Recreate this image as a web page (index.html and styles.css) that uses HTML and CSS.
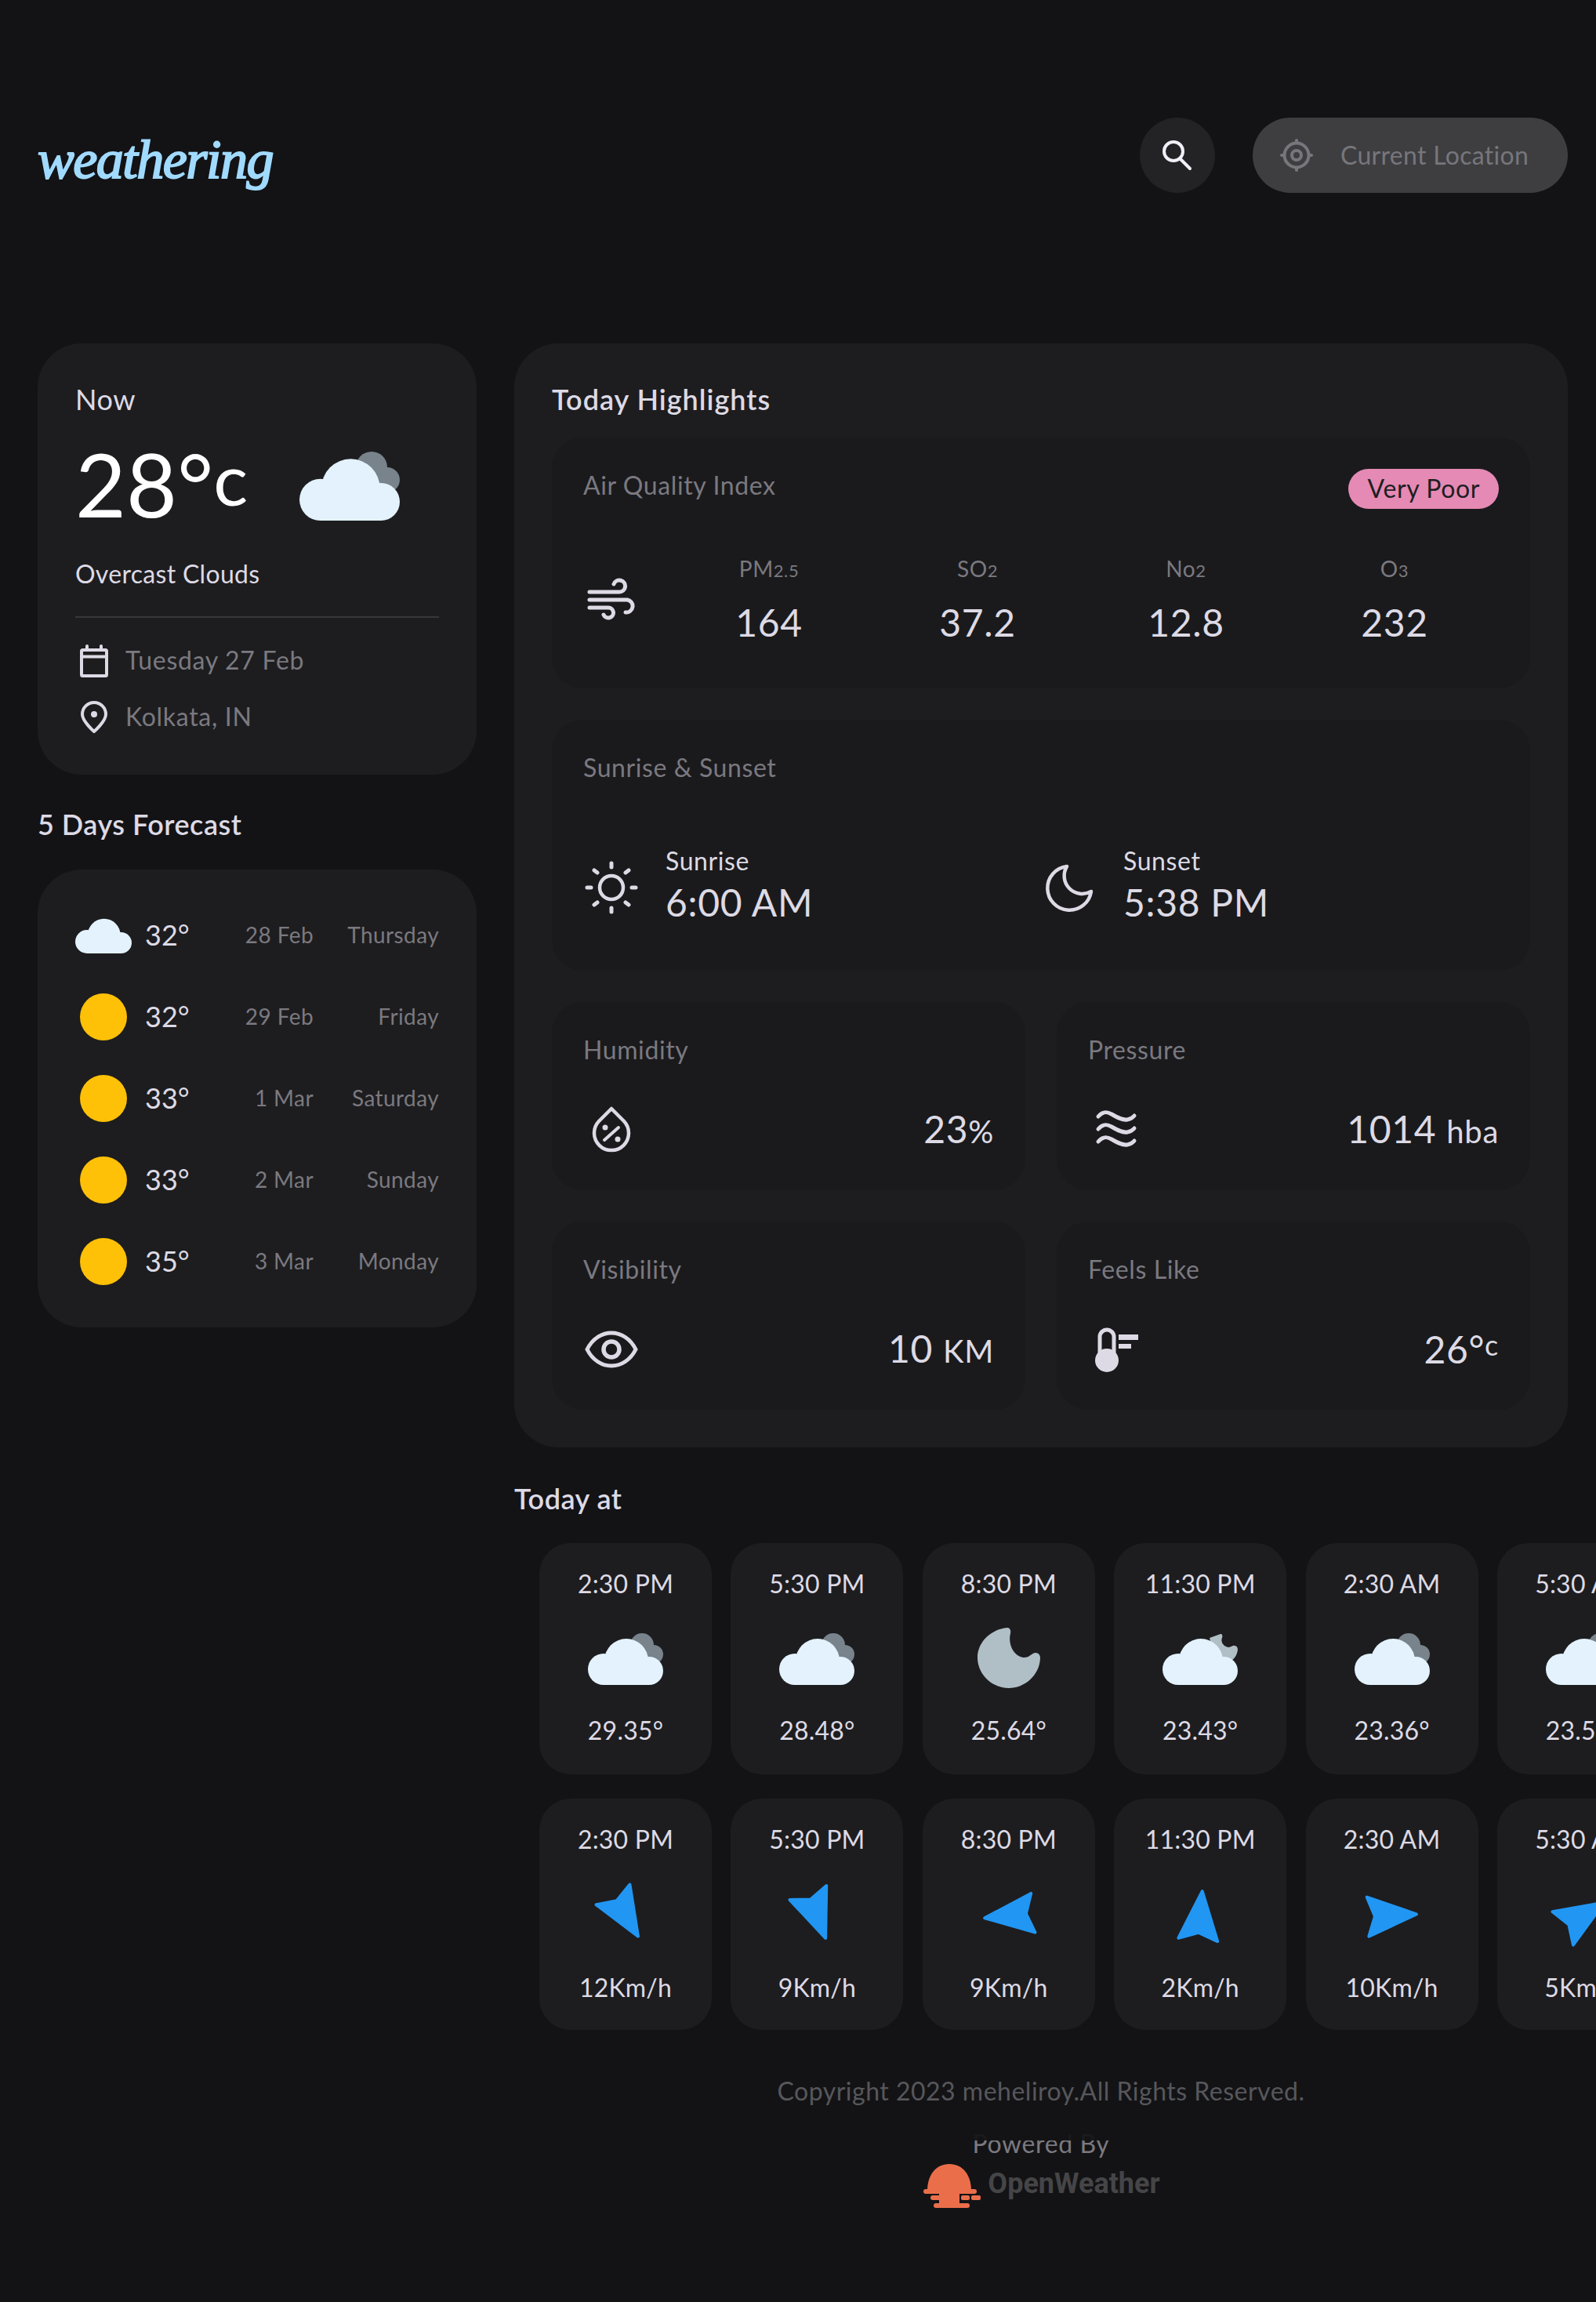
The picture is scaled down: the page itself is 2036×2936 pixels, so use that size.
FILE: index.html
```html
<!DOCTYPE html>
<html lang="en">
<head>
  <meta charset="UTF-8">
  <title>Weathering</title>
  <link rel="stylesheet" href="styles.css">
</head>
<body>

  <svg class="defs" width="0" height="0">
    <symbol id="cloud-front" viewBox="0 0 96 66">
      <g fill="#e3f2fd">
        <circle cx="20" cy="46" r="20"/>
        <circle cx="49" cy="35" r="28"/>
        <circle cx="78" cy="48" r="18"/>
        <rect x="20" y="40" width="58" height="26"/>
      </g>
    </symbol>
    <symbol id="cloud-over" viewBox="0 0 96 66">
      <g fill="#78838b">
        <circle cx="69" cy="15" r="15"/>
        <circle cx="84" cy="27" r="12"/>
        <rect x="60" y="20" width="24" height="20"/>
      </g>
      <use href="#cloud-front" width="96" height="66"/>
    </symbol>
    <symbol id="cloud-moon" viewBox="0 0 96 66">
      <path fill="#b0bec5" d="M74 1C76 1 77 3 76 6C74 10 77 17 84 18C88 18 90 15 92 16C95 16 96 19 96 21C95 28 92 33 86 36L68 36L60 6Z"/>
      <use href="#cloud-front" width="96" height="66"/>
    </symbol>
    <symbol id="arrow" viewBox="-48 -48 96 96">
      <polygon fill="#2196f3" stroke="#2196f3" stroke-width="4" stroke-linejoin="round" points="0,-31 25,31 0,22 -25,31"/>
    </symbol>
  </svg>

  <div class="page">

    <header class="header">
      <div class="logo">weathering</div>
      <div class="header-actions">
        <button class="search-btn" type="button" aria-label="Search">
          <svg width="48" height="48" viewBox="0 0 48 48" fill="none" stroke="#f1eff8" stroke-width="4" stroke-linecap="round">
            <circle cx="19" cy="19" r="12"/>
            <path d="M28 29L40 41"/>
          </svg>
        </button>
        <button class="location-btn" type="button">
          <svg width="48" height="48" viewBox="0 0 48 48" fill="none" stroke="#77767c" stroke-width="4" stroke-linecap="round">
            <circle cx="24" cy="24" r="15.5"/>
            <circle cx="24" cy="24" r="6"/>
            <path d="M24 5V8M24 40V43M5 24H8M40 24H43"/>
          </svg>
          <span>Current Location</span>
        </button>
      </div>
    </header>

    <main class="main">

      <div class="left-col">
        <section class="card now-card">
          <h2 class="now-title">Now</h2>
          <div class="hero">
            <p class="hero-temp">28°<span class="hero-unit">c</span></p>
            <svg class="hero-icon" width="128" height="88"><use href="#cloud-over" width="128" height="88"/></svg>
          </div>
          <p class="now-desc">Overcast Clouds</p>
          <ul class="meta">
            <li>
              <svg width="48" height="48" viewBox="0 0 48 48" fill="none" stroke="#dddae5" stroke-width="4" stroke-linejoin="round" stroke-linecap="round">
                <rect x="8" y="11" width="32" height="33" rx="1.5"/>
                <path d="M8 19.5H40M15 6V10M33 6V10"/>
              </svg>
              <span>Tuesday 27 Feb</span>
            </li>
            <li>
              <svg width="48" height="48" viewBox="0 0 48 48" fill="none" stroke="#dddae5" stroke-width="4" stroke-linejoin="round">
                <path d="M24 43C24 43 9 30 9 21A15 15 0 0 1 39 21C39 30 24 43 24 43Z"/>
                <circle cx="24" cy="21" r="4" fill="#dddae5" stroke="none"/>
              </svg>
              <span>Kolkata, IN</span>
            </li>
          </ul>
        </section>

        <h2 class="section-title forecast-title">5 Days Forecast</h2>
        <section class="card forecast">
          <div class="forecast-row">
            <svg class="forecast-cloud" width="72" height="45" viewBox="0 6 96 60"><use href="#cloud-front" width="96" height="66"/></svg>
            <span class="forecast-temp">32°</span>
            <span class="forecast-date">28 Feb</span>
            <span class="forecast-day">Thursday</span>
          </div>
          <div class="forecast-row">
            <span class="sun"></span>
            <span class="forecast-temp">32°</span>
            <span class="forecast-date">29 Feb</span>
            <span class="forecast-day">Friday</span>
          </div>
          <div class="forecast-row">
            <span class="sun"></span>
            <span class="forecast-temp">33°</span>
            <span class="forecast-date">1 Mar</span>
            <span class="forecast-day">Saturday</span>
          </div>
          <div class="forecast-row">
            <span class="sun"></span>
            <span class="forecast-temp">33°</span>
            <span class="forecast-date">2 Mar</span>
            <span class="forecast-day">Sunday</span>
          </div>
          <div class="forecast-row">
            <span class="sun"></span>
            <span class="forecast-temp">35°</span>
            <span class="forecast-date">3 Mar</span>
            <span class="forecast-day">Monday</span>
          </div>
        </section>
      </div>

      <div class="right-col">
        <section class="card highlights">
          <h2 class="section-title highlights-title">Today Highlights</h2>

          <div class="tile tile-air">
            <div class="tile-head">
              <h3 class="tile-title">Air Quality Index</h3>
              <span class="badge">Very Poor</span>
            </div>
            <div class="air-body">
              <svg class="icon-72" viewBox="0 0 72 72" fill="none" stroke="#dddae5" stroke-width="5" stroke-linecap="round">
                <path d="M8 26H46a7.5 7.5 0 1 0-7-10"/>
                <path d="M8 36H56a8 8 0 1 1-2 16"/>
                <path d="M8 46H32a6.5 6.5 0 1 1-6 9"/>
              </svg>
              <div class="air-grid">
                <div class="air-stat"><p class="air-label">PM<small>2.5</small></p><p class="value">164</p></div>
                <div class="air-stat"><p class="air-label">SO<small>2</small></p><p class="value">37.2</p></div>
                <div class="air-stat"><p class="air-label">No<small>2</small></p><p class="value">12.8</p></div>
                <div class="air-stat"><p class="air-label">O<small>3</small></p><p class="value">232</p></div>
              </div>
            </div>
          </div>

          <div class="tile tile-sun">
            <h3 class="tile-title">Sunrise &amp; Sunset</h3>
            <div class="sun-body">
              <div class="sun-item">
                <svg class="icon-72" viewBox="0 0 72 72" fill="none" stroke="#dddae5" stroke-linecap="round">
                  <circle cx="36" cy="36" r="15" stroke-width="4.5"/>
                  <path stroke-width="5" d="M36 5V10M36 62V67M5 36H10M62 36H67M14 14L18 17M54 55L58 58M14 58L18 55M54 17L58 14"/>
                </svg>
                <div>
                  <p class="sun-label">Sunrise</p>
                  <p class="value">6:00 AM</p>
                </div>
              </div>
              <div class="sun-item">
                <svg class="icon-72" viewBox="0 0 72 72" fill="none" stroke="#dddae5" stroke-width="4.5" stroke-linejoin="round">
                  <path d="M33 9A28 28 0 1 0 64 41A23 23 0 0 1 33 9Z"/>
                </svg>
                <div>
                  <p class="sun-label">Sunset</p>
                  <p class="value">5:38 PM</p>
                </div>
              </div>
            </div>
          </div>

          <div class="tile-grid">
            <div class="tile tile-small">
              <h3 class="tile-title">Humidity</h3>
              <div class="small-body">
                <svg class="icon-72" viewBox="0 0 72 72" fill="none" stroke="#dddae5" stroke-width="4.5" stroke-linejoin="round" stroke-linecap="round">
                  <path d="M36 9L20 25A22 22 0 1 0 52 25Z"/>
                  <path stroke-width="4" d="M27 49L45 33"/>
                  <circle cx="28" cy="33" r="3.5" fill="#dddae5" stroke="none"/>
                  <circle cx="44" cy="48" r="3.5" fill="#dddae5" stroke="none"/>
                </svg>
                <p class="value">23<span class="unit">%</span></p>
              </div>
            </div>
            <div class="tile tile-small">
              <h3 class="tile-title">Pressure</h3>
              <div class="small-body">
                <svg class="icon-72" viewBox="0 0 72 72" fill="none" stroke="#dddae5" stroke-width="5" stroke-linecap="round">
                  <path d="M13 19C18 13 23 12 30 16S44 24 50 23 57 20 59 18"/>
                  <path d="M13 35C18 29 23 28 30 32S44 40 50 39 57 36 59 34"/>
                  <path d="M13 51C18 45 23 44 30 48S44 56 50 55 57 52 59 50"/>
                </svg>
                <p class="value">1014 <span class="unit">hba</span></p>
              </div>
            </div>
            <div class="tile tile-small">
              <h3 class="tile-title">Visibility</h3>
              <div class="small-body">
                <svg class="icon-72" viewBox="0 0 72 72" fill="none" stroke="#dddae5" stroke-width="5">
                  <path d="M5 36C12 22 24 15 36 15S60 22 67 36C60 50 48 57 36 57S12 50 5 36Z"/>
                  <circle cx="36" cy="36" r="10" stroke-width="5.5"/>
                </svg>
                <p class="value">10 <span class="unit">KM</span></p>
              </div>
            </div>
            <div class="tile tile-small">
              <h3 class="tile-title">Feels Like</h3>
              <div class="small-body">
                <svg class="icon-72" viewBox="0 0 72 72" fill="none" stroke="#dddae5" stroke-width="5">
                  <path d="M15 44V20a9 9 0 0 1 18 0V44"/>
                  <circle cx="24" cy="50" r="15" fill="#dddae5" stroke="none"/>
                  <path fill="#dddae5" stroke="none" d="M39 17H64V24H39ZM39 29H55V35H39Z"/>
                </svg>
                <p class="value">26°<span class="unit-raised">c</span></p>
              </div>
            </div>
          </div>
        </section>

        <h2 class="section-title today-title">Today at</h2>
        <div class="slots">
          <div class="slot"><p>2:30 PM</p><svg class="slot-cloud" width="96" height="66"><use href="#cloud-over" width="96" height="66"/></svg><p>29.35°</p></div>
          <div class="slot"><p>5:30 PM</p><svg class="slot-cloud" width="96" height="66"><use href="#cloud-over" width="96" height="66"/></svg><p>28.48°</p></div>
          <div class="slot"><p>8:30 PM</p>
            <svg class="slot-moon" width="80" height="78" viewBox="0 0 80 78"><path fill="#b0bec5" d="M38 1C41 1 43 4 42 8C39 20 44 36 58 39C66 40 69 33 74 33C78 33 80 36 80 40C79 62 60 78 40 78C18 78 0 60 0 39C0 20 16 3 38 1Z"/></svg>
            <p>25.64°</p></div>
          <div class="slot"><p>11:30 PM</p><svg class="slot-cloud" width="96" height="66"><use href="#cloud-moon" width="96" height="66"/></svg><p>23.43°</p></div>
          <div class="slot"><p>2:30 AM</p><svg class="slot-cloud" width="96" height="66"><use href="#cloud-over" width="96" height="66"/></svg><p>23.36°</p></div>
          <div class="slot"><p>5:30 AM</p><svg class="slot-cloud" width="96" height="66"><use href="#cloud-over" width="96" height="66"/></svg><p>23.56°</p></div>
        </div>
        <div class="slots slots-wind">
          <div class="slot"><p>2:30 PM</p><svg class="slot-arrow" width="96" height="96" style="transform: rotate(149deg)"><use href="#arrow" width="96" height="96"/></svg><p>12Km/h</p></div>
          <div class="slot"><p>5:30 PM</p><svg class="slot-arrow" width="96" height="96" style="transform: rotate(159deg)"><use href="#arrow" width="96" height="96"/></svg><p>9Km/h</p></div>
          <div class="slot"><p>8:30 PM</p><svg class="slot-arrow" width="96" height="96" style="transform: rotate(264deg)"><use href="#arrow" width="96" height="96"/></svg><p>9Km/h</p></div>
          <div class="slot"><p>11:30 PM</p><svg class="slot-arrow" width="96" height="96" style="transform: rotate(5deg)"><use href="#arrow" width="96" height="96"/></svg><p>2Km/h</p></div>
          <div class="slot"><p>2:30 AM</p><svg class="slot-arrow" width="96" height="96" style="transform: rotate(87deg)"><use href="#arrow" width="96" height="96"/></svg><p>10Km/h</p></div>
          <div class="slot"><p>5:30 AM</p><svg class="slot-arrow" width="96" height="96" style="transform: rotate(58deg)"><use href="#arrow" width="96" height="96"/></svg><p>5Km/h</p></div>
        </div>

        <footer class="footer">
          <p class="copyright">Copyright 2023 meheliroy.All Rights Reserved.</p>
          <p class="powered">Powered By</p>
          <div class="owm">
            <svg width="74" height="56" viewBox="0 0 74 56" fill="#eb6e4b">
              <path d="M5 34C5 14 16 0 33 0S61 14 61 34Z"/>
              <rect x="0" y="32" width="68" height="6" rx="3"/>
              <rect x="9" y="40" width="36" height="6" rx="3"/>
              <rect x="20" y="36" width="26" height="16"/>
              <rect x="48" y="40" width="11" height="6" rx="2"/>
              <rect x="61" y="40" width="12" height="6" rx="2"/>
              <rect x="13" y="50" width="46" height="6" rx="3"/>
            </svg>
            <span>OpenWeather</span>
          </div>
        </footer>
      </div>

    </main>
  </div>

</body>
</html>
```

FILE: styles.css
```css
* {
  box-sizing: border-box;
}

html,
body {
  margin: 0;
  padding: 0;
  overflow: hidden;
}

body {
  background-color: #131315;
  color: #dddae5;
  font-family: Lato, "Noto Sans", sans-serif;
  font-size: 32px;
  line-height: 40px;
  letter-spacing: 0.6px;
  min-height: 100vh;
}

h2, h3, p, ul {
  margin: 0;
  padding: 0;
}

ul {
  list-style: none;
}

svg {
  display: block;
  flex-shrink: 0;
}

.defs {
  position: absolute;
}

.page {
  padding: 150px 36px 0 48px;
}

/* header */
.header {
  display: flex;
  justify-content: space-between;
  align-items: center;
  height: 96px;
  margin-bottom: 192px;
}

.logo {
  font-family: "Liberation Serif", serif;
  font-style: italic;
  font-size: 70px;
  line-height: 96px;
  letter-spacing: -1.5px;
  color: #a1daff;
  -webkit-text-stroke: 2px #a1daff;
  padding-top: 12px;
}

.header-actions {
  display: flex;
  gap: 48px;
}

.search-btn {
  width: 96px;
  height: 96px;
  border: none;
  border-radius: 50%;
  background-color: #232325;
  display: flex;
  align-items: center;
  justify-content: center;
  padding: 0;
}

.location-btn {
  width: 402px;
  height: 96px;
  border: none;
  border-radius: 48px;
  background-color: #3e3e40;
  color: #77767c;
  font: inherit;
  letter-spacing: 0.3px;
  display: flex;
  align-items: center;
  gap: 32px;
  padding: 0 0 0 32px;
}

/* main grid */
.main {
  display: grid;
  grid-template-columns: 560px 1344px;
  gap: 48px;
  align-items: start;
}

.card {
  background-color: #1d1d1f;
  border-radius: 56px;
}

.section-title {
  font-size: 36px;
  line-height: 46px;
  font-weight: 600;
  letter-spacing: 0.5px;
  color: #dddae5;
}

.highlights-title {
  letter-spacing: 1px;
}

/* now card */
.now-card {
  padding: 48px 48px 50px;
}

.now-title {
  font-size: 36px;
  line-height: 46px;
  font-weight: 400;
}

.hero {
  display: flex;
  align-items: center;
  height: 160px;
  margin-top: 8px;
}

.hero-temp {
  font-size: 112px;
  line-height: 154px;
  letter-spacing: 0;
  color: #fff;
  margin-bottom: 6px;
}

.hero-unit {
  font-size: 92px;
  vertical-align: 15px;
  line-height: 1;
}

.hero-icon {
  margin-left: auto;
  margin-right: 50px;
}

.now-desc {
  margin-top: 12px;
  padding-bottom: 34px;
  border-bottom: 2px solid #37373a;
  letter-spacing: 0.3px;
}

.meta {
  margin-top: 30px;
  display: flex;
  flex-direction: column;
  gap: 24px;
  color: #7b7980;
  letter-spacing: 0.7px;
}

.meta li {
  display: flex;
  align-items: center;
  gap: 16px;
}

/* forecast */
.forecast-title {
  margin-top: 40px;
}

.forecast {
  margin-top: 35px;
  padding: 32px 48px;
}

.forecast-row {
  display: grid;
  grid-template-columns: 72px 72px 1fr 160px;
  align-items: center;
  justify-items: center;
  height: 104px;
}

.sun {
  width: 60px;
  height: 60px;
  border-radius: 50%;
  background-color: #ffc107;
}

.forecast-temp {
  font-size: 36px;
  letter-spacing: 0;
  justify-self: start;
  padding-left: 17px;
  margin-bottom: 2px;
}

.forecast-date,
.forecast-day {
  font-size: 28px;
  letter-spacing: 0.4px;
  color: #7b7980;
  justify-self: end;
  margin-bottom: 2px;
}

/* highlights */
.highlights {
  padding: 48px;
}

.tile {
  background-color: #1a1a1c;
  border-radius: 40px;
  padding: 40px;
}

.tile-title {
  font-size: 32px;
  line-height: 42px;
  font-weight: 400;
  color: #7b7980;
}

.value {
  font-size: 48px;
  line-height: 56px;
  letter-spacing: 0.7px;
}

.icon-72 {
  width: 72px;
  height: 72px;
}

.tile-air {
  margin-top: 26px;
  height: 320px;
}

.tile-head {
  display: flex;
  justify-content: space-between;
  align-items: flex-start;
}

.badge {
  background-color: #e58ab5;
  color: #1f1f22;
  border-radius: 26px;
  height: 51px;
  line-height: 50px;
  padding: 0 24px 0 25px;
  font-size: 32px;
  letter-spacing: 0.6px;
}

.air-body {
  display: flex;
  align-items: center;
  gap: 32px;
  margin-top: 58px;
}

.air-grid {
  flex: 1;
  display: grid;
  grid-template-columns: repeat(4, 1fr);
}

.air-stat {
  text-align: center;
}

.air-label {
  font-size: 28px;
  line-height: 36px;
  color: #7b7980;
  margin-bottom: 20px;
}

.air-label small {
  font-size: 22px;
}

.tile-sun {
  margin-top: 40px;
  height: 320px;
}

.sun-body {
  display: grid;
  grid-template-columns: 1fr 1fr;
  margin-top: 78px;
}

.sun-item {
  display: flex;
  align-items: center;
  gap: 33px;
}

.sun-item .icon-72 {
  margin-top: 7px;
}

.sun-label {
  line-height: 40px;
  margin-bottom: 5px;
}

.sun-item .value {
  line-height: 56px;
}

.tile-grid {
  display: grid;
  grid-template-columns: 1fr 1fr;
  gap: 40px;
  margin-top: 40px;
}

.tile-small {
  height: 240px;
}

.small-body {
  display: flex;
  justify-content: space-between;
  align-items: center;
  margin-top: 45px;
}

.unit {
  font-size: 40px;
}

.unit-raised {
  font-size: 36px;
  vertical-align: 10px;
  line-height: 1;
}

/* today at */
.today-title {
  margin-top: 42px;
}

.slots {
  display: flex;
  gap: 24.4px;
  margin: 34px -36px 0 0;
  padding-left: 32px;
  overflow: hidden;
  letter-spacing: 0.2px;
}

.slots-wind {
  margin-top: 31px;
}

.slot {
  flex: 0 0 220px;
  height: 295px;
  background-color: #1d1d1f;
  border-radius: 40px;
  padding-top: 32px;
  display: flex;
  flex-direction: column;
  align-items: center;
  text-align: center;
}

.slot-cloud {
  margin: 43px 0 38px;
}

.slot-moon {
  margin: 35px 0 34px;
}

.slot-arrow {
  margin: 29px 0 24px;
}

/* footer */
.footer {
  display: flex;
  flex-direction: column;
  align-items: center;
  margin-top: 58px;
}

.copyright {
  color: #57575c;
  letter-spacing: 0.5px;
}

.powered {
  position: relative;
  margin-top: 27px;
  color: #7b7980;
}

.powered::before {
  content: "";
  position: absolute;
  left: 0;
  right: 0;
  top: 0;
  height: 16px;
  background-color: rgba(19, 19, 21, 0.93);
}

.owm {
  display: flex;
  align-items: center;
  gap: 8px;
  margin-top: 6px;
  margin-left: 2px;
}

.owm span {
  font-family: Roboto, sans-serif;
  font-weight: 700;
  font-size: 36px;
  line-height: 48px;
  letter-spacing: 0;
  color: #454547;
  margin-top: -6px;
}
```
